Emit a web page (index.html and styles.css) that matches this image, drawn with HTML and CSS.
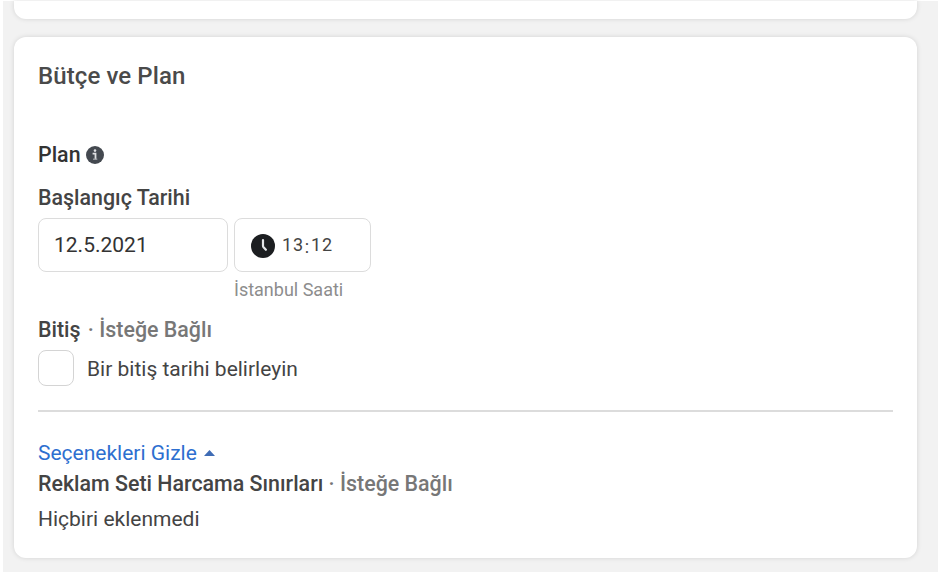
FILE: index.html
```html
<!DOCTYPE html>
<html lang="tr">
<head>
    <meta charset="UTF-8">
    <meta name="viewport" content="width=device-width, initial-scale=1.0">
    <title>Bütçe ve Plan</title>
    <link rel="stylesheet" href="styles.css">
</head>

<body>
    <main class="page">
        <section class="card card-previous"></section>

        <section class="card card-budget">
            <h1 class="card-title">Bütçe ve Plan</h1>

            <h2 class="plan-title">
                <span>Plan</span>
                <svg class="info-icon" viewBox="0 0 18 18">
                    <circle cx="9" cy="9" r="9" fill="#444950"/>
                    <path d="M6.6 7.6h2.9v5.6" fill="none" stroke="#dfe0e2" stroke-width="1.8"/>
                    <path d="M7 13.2h4.3" fill="none" stroke="#a5a8ac" stroke-width="1.2"/>
                    <circle cx="9" cy="4.6" r="1.3" fill="#dfe0e2"/>
                </svg>
            </h2>

            <div class="field-label start-label">Başlangıç Tarihi</div>
            <div class="start-row">
                <div class="input-box date-box">12.5.2021</div>
                <div class="time-column">
                    <div class="input-box time-box">
                        <svg class="clock-icon" viewBox="0 0 24 24">
                            <circle cx="12" cy="12" r="12" fill="#1c1e21"/>
                            <path d="M12 6v5.8q0 .8.6 1.5l2.3 2.5" fill="none" stroke="#e4e6e9" stroke-width="2.2" stroke-linecap="round"/>
                        </svg>
                        <span class="time-value">13<span class="time-colon">:</span>12</span>
                    </div>
                    <div class="timezone">İstanbul Saati</div>
                </div>
            </div>

            <div class="field-label end-label">Bitiş <span class="optional end-optional">· İsteğe Bağlı</span></div>
            <label class="end-row">
                <input type="checkbox" class="checkbox">
                <span class="end-text">Bir bitiş tarihi belirleyin</span>
            </label>

            <hr class="divider">

            <a class="toggle-link">
                <span>Seçenekleri Gizle</span>
                <svg class="caret-icon" viewBox="0 0 11 6">
                    <path d="M5.5 0L11 6H0z" fill="#3f6cb5"/>
                </svg>
            </a>
            <div class="field-label limit-label">Reklam Seti Harcama Sınırları <span class="optional">· İsteğe Bağlı</span></div>
            <div class="limit-value">Hiçbiri eklenmedi</div>
        </section>
    </main>
</body>
</html>
```
FILE: styles.css
```css
/* General Styles */
* {
    box-sizing: border-box;
}

body {
    font-family: Roboto, sans-serif;
    font-size: 21px;
    line-height: 30px;
    margin: 0;
    padding: 1px 0 0 3px;
    height: 572px;
    overflow: hidden;
    color: #444;
    background-color: #fff;
}

.page {
    height: 571px;
    padding: 0 21px 0 11px;
    background-color: #f2f2f2;
}

.card {
    background-color: #fff;
    border-radius: 12px;
    box-shadow: 0 0 5px rgba(0, 0, 0, 0.13);
}

.card-previous {
    height: 18px;
    margin-bottom: 18px;
    border-radius: 0 0 12px 12px;
}

.card-budget {
    height: 521px;
    padding: 24px 24px 0;
}

/* Headings */
.card-title {
    margin: 0;
    font-size: 24px;
    font-weight: 500;
    line-height: 30px;
    letter-spacing: 0.1px;
    color: #4a4a4a;
}

.plan-title {
    display: flex;
    align-items: center;
    gap: 5px;
    margin: 49px 0 0;
    font-size: 21.4px;
    font-weight: 500;
    line-height: 30px;
    color: #333;
}

.info-icon {
    width: 18px;
    height: 18px;
}

.field-label {
    font-size: 21.4px;
    font-weight: 500;
    white-space: nowrap;
}

.optional {
    color: #777;
}

.start-label {
    margin-top: 13px;
}

/* Date and time */
.start-row {
    display: flex;
    gap: 6px;
    margin-top: 5px;
}

.input-box {
    display: flex;
    align-items: center;
    height: 54px;
    border: 1.5px solid #dcdcdc;
    border-radius: 8px;
}

.date-box {
    width: 190px;
    padding-left: 15px;
    color: #333;
}

.time-box {
    width: 137px;
    gap: 7px;
    padding: 1px 0 0 16px;
    font-size: 18px;
    letter-spacing: 0.8px;
}

.time-value {
    padding-bottom: 2px;
}

.time-colon {
    position: relative;
    top: 2px;
    margin: 0 1px;
}

.clock-icon {
    width: 24px;
    height: 24px;
}

.timezone {
    margin-top: 6px;
    font-size: 18px;
    line-height: 24px;
    color: #8d8d8d;
}

/* End date */
.end-label {
    margin-top: 13px;
}

.end-optional {
    margin-left: 2px;
}

.end-row {
    display: flex;
    align-items: center;
    gap: 13px;
    margin-top: 5px;
}

.end-text {
    padding-top: 2px;
}

.checkbox {
    appearance: none;
    width: 36px;
    height: 36px;
    margin: 0;
    border: 1px solid #d4d4d4;
    border-radius: 8px;
}

.divider {
    height: 2px;
    margin: 24px 0 0;
    border: none;
    background-color: #dcdcdc;
}

/* Spending limits */
.toggle-link {
    display: flex;
    align-items: center;
    gap: 7px;
    margin-top: 26px;
    color: #2d6fd0;
    cursor: pointer;
}

.caret-icon {
    width: 11px;
    height: 6px;
}

.limit-label {
    margin-top: 1px;
}

.limit-value {
    margin-top: 5px;
}
```
